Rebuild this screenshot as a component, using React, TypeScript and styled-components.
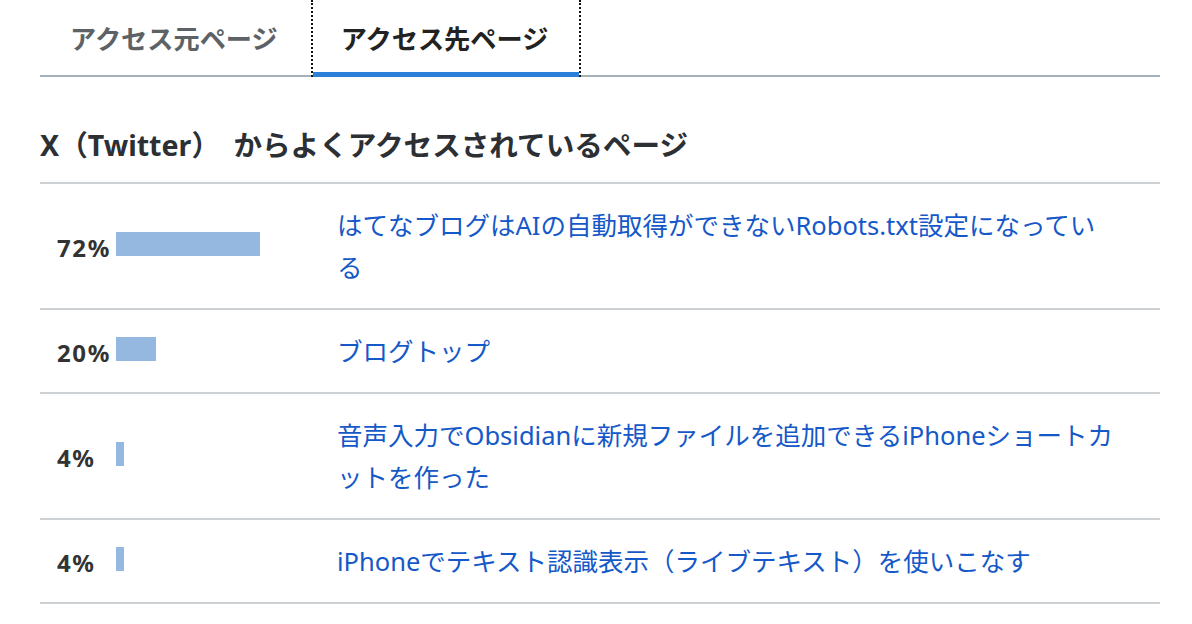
import React from "react";
import styled, { createGlobalStyle } from "styled-components";

const Global = createGlobalStyle`
  html, body { margin: 0; padding: 0; background: #fff; }
  body { font-family: "Noto Sans", "Noto Sans CJK JP", sans-serif; }
`;

const Page = styled.div`
  padding: 0 32px 0 40px;
  width: 1120px;
`;

const TabList = styled.div`
  display: flex;
  border-bottom: 2px solid #a7b1ba;
`;

const Tab = styled.div<{ $active?: boolean }>`
  height: 77px;
  margin-bottom: -2px;
  box-sizing: border-box;
  display: flex;
  align-items: center;
  padding: 0 31px 2px 28px;
  font-size: 26.2px;
  font-weight: 700;
  color: ${(p) => (p.$active ? "#222" : "#5d6266")};
  border-left: 2px ${(p) => (p.$active ? "dotted #111" : "solid transparent")};
  border-right: 2px ${(p) => (p.$active ? "dotted #111" : "solid transparent")};
  box-shadow: ${(p) => (p.$active ? "inset 0 -5px 0 #2a7fd8" : "none")};
`;

const Heading = styled.h2`
  margin: 0;
  padding: 47px 0 16px;
  font-size: 28.6px;
  line-height: 42px;
  font-weight: 700;
  color: #2c3034;
  word-spacing: 6px;
`;

const Table = styled.div`
  border-top: 2px solid #cdd1d5;
`;

const Row = styled.div`
  display: grid;
  grid-template-columns: 297px 1fr;
  align-items: center;
  border-bottom: 2px solid #cdd1d5;
  padding: 20px 0;
`;

const Ratio = styled.div`
  display: flex;
  align-items: center;
  padding-left: 17px;
  margin-bottom: 4px;
`;

const Percent = styled.span`
  width: 59px;
  font-family: "Noto Sans", sans-serif;
  font-size: 24px;
  letter-spacing: 1.6px;
  line-height: 30px;
  font-weight: 700;
  color: #333;
  padding-top: 8px;
`;

const Bar = styled.span`
  display: block;
  height: 24px;
  background: #94b8e0;
`;

const Link = styled.a`
  font-size: 25.5px;
  line-height: 42px;
  color: #1558c8;
  text-decoration: none;
  padding-right: 45px;
`;

const rows = [
  { pct: 72, title: "はてなブログはAIの自動取得ができないRobots.txt設定になっている" },
  { pct: 20, title: "ブログトップ" },
  { pct: 4, title: "音声入力でObsidianに新規ファイルを追加できるiPhoneショートカットを作った" },
  { pct: 4, title: "iPhoneでテキスト認識表示（ライブテキスト）を使いこなす" },
];

export default function App() {
  return (
    <Page>
      <Global />
      <TabList>
        <Tab>アクセス元ページ</Tab>
        <Tab $active>アクセス先ページ</Tab>
      </TabList>
      <Heading>X（Twitter） からよくアクセスされているページ</Heading>
      <Table>
        {rows.map((r, i) => (
          <Row key={i}>
            <Ratio>
              <Percent>{r.pct}%</Percent>
              <Bar style={{ width: r.pct * 2 }} />
            </Ratio>
            <Link href="#">{r.title}</Link>
          </Row>
        ))}
      </Table>
    </Page>
  );
}
